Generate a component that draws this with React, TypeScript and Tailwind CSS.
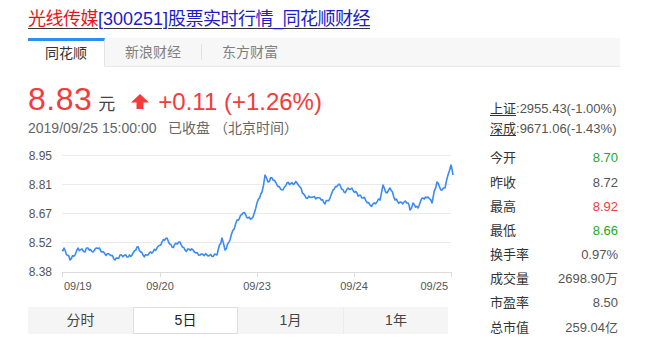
import React from 'react';

const ANCHORS: [number, number][] = [
  [62, 250], [64, 248], [70, 260], [75, 255], [78, 248], [85, 252], [88, 248], [93, 252], [97, 248],
  [102, 252], [110, 255], [115, 260], [120, 255], [127, 257], [132, 255], [137, 247], [143, 255],
  [148, 255], [153, 252], [157, 248], [162, 242], [167, 238], [172, 247], [180, 242], [185, 250],
  [193, 250], [200, 255], [207, 255], [217, 255], [222, 238], [225, 250], [230, 240], [237, 220],
  [243, 213], [248, 218], [253, 217], [257, 203], [262, 192], [265, 175], [268, 182], [272, 178],
  [277, 185], [283, 190], [287, 183], [297, 183], [300, 187], [306, 198], [313, 197], [320, 198],
  [325, 204], [330, 198], [333, 190], [339, 184], [344, 192], [348, 188], [357, 193], [363, 198],
  [370, 205], [377, 202], [380, 200], [383, 185], [387, 193], [390, 188], [395, 200], [400, 202],
  [408, 203], [410, 210], [413, 203], [418, 208], [422, 198], [428, 197], [432, 203], [433, 198],
  [437, 182], [442, 190], [445, 188], [448, 175], [451, 165], [453, 175],
];

// 앵커 사이를 잘게 나눠 살짝 흔들어 준다 (5일 분봉 느낌)
function buildLine() {
  const pts: string[] = [];
  let i = 0;
  for (let s = 0; s < ANCHORS.length - 1; s++) {
    const [x0, y0] = ANCHORS[s];
    const [x1, y1] = ANCHORS[s + 1];
    const steps = Math.max(1, Math.round((x1 - x0) / 1.3));
    for (let k = 0; k < steps; k++) {
      const t = k / steps;
      const jitter = k === 0 ? 0 : Math.sin(i * 1.9) * 1.3 + Math.sin(i * 0.61) * 0.8;
      pts.push(`${(x0 + (x1 - x0) * t).toFixed(1)},${(y0 + (y1 - y0) * t + jitter).toFixed(1)}`);
      i++;
    }
  }
  const last = ANCHORS[ANCHORS.length - 1];
  pts.push(`${last[0]},${last[1]}`);
  return 'M' + pts.join(' L');
}

const LINE = buildLine();

const Y_LABELS = [
  { v: '8.95', y: 155 },
  { v: '8.81', y: 184 },
  { v: '8.67', y: 213 },
  { v: '8.52', y: 242 },
  { v: '8.38', y: 271 },
];

const X_TICKS = [62, 160, 257, 354, 451];

function Chart() {
  return (
    <svg width="432" height="152" viewBox="28 145 432 152" className="block mt-[7px]">
      {Y_LABELS.slice(0, 4).map(l => (
        <line key={l.v} x1="62" x2="451" y1={l.y + 0.5} y2={l.y + 0.5} stroke="#ebebeb" strokeWidth="1" />
      ))}
      <line x1="62" x2="452" y1="272.5" y2="272.5" stroke="#dcdcdc" strokeWidth="1" />
      {X_TICKS.map(x => (
        <line key={x} x1={x + 0.5} x2={x + 0.5} y1="272" y2="277" stroke="#dcdcdc" strokeWidth="1" />
      ))}
      {Y_LABELS.map(l => (
        <text key={l.v} x="52" y={l.y + 4.5} textAnchor="end" fontSize="12" fill="#555"
          fontFamily="'Liberation Sans', sans-serif">{l.v}</text>
      ))}
      <g fontSize="11" fill="#555" fontFamily="'Liberation Sans', sans-serif">
        <text x="64" y="290">09/19</text>
        <text x="160" y="290" textAnchor="middle">09/20</text>
        <text x="257" y="290" textAnchor="middle">09/23</text>
        <text x="354" y="290" textAnchor="middle">09/24</text>
        <text x="448" y="290" textAnchor="end">09/25</text>
      </g>
      <path d={LINE} fill="none" stroke="#3a8af6" strokeWidth="1.6" strokeLinejoin="round" />
    </svg>
  );
}

function UpArrow() {
  return (
    <svg width="18" height="15" viewBox="0 0 18 15" className="ml-[16px] self-center mt-[4px]">
      <path d="M9 0 L18 8.5 L12.5 8.5 L12.5 15 L5.5 15 L5.5 8.5 L0 8.5 Z" fill="#f43b3b" />
    </svg>
  );
}

const STATS: { label: string; value: string; color: string }[] = [
  { label: '今开', value: '8.70', color: 'text-[#22a822]' },
  { label: '昨收', value: '8.72', color: 'text-[#555]' },
  { label: '最高', value: '8.92', color: 'text-[#f43b3b]' },
  { label: '最低', value: '8.66', color: 'text-[#22a822]' },
  { label: '换手率', value: '0.97%', color: 'text-[#555]' },
  { label: '成交量', value: '2698.90万', color: 'text-[#555]' },
  { label: '市盈率', value: '8.50', color: 'text-[#555]' },
  { label: '总市值', value: '259.04亿', color: 'text-[#555]' },
];

const RANGES = ['分时', '5日', '1月', '1年'];

export default function App() {
  return (
    <div className="w-[660px] h-[348px] overflow-hidden bg-white pl-[28px] text-[#333] font-['Liberation_Sans','Noto_Sans_CJK_SC',sans-serif]">
      {/* 제목 링크 */}
      <h1 className="pt-[8px] h-[30px] text-[18px] leading-[22px] font-normal underline underline-offset-[3px] decoration-1 whitespace-nowrap">
        <span className="text-[#e4161b] tracking-[-0.5px]">光线传媒</span>
        <span className="text-[#1c1cc8]">
          [300251]<span className="tracking-[-0.5px]">股票实时行情_同花顺财经</span>
        </span>
      </h1>

      {/* 출처 탭 */}
      <div className="mt-[8px] w-[592px] h-[29px] flex items-stretch bg-[#f7f7f7] border-b border-[#e8e8e8]">
        <div className="w-[77px] -mb-px flex items-center justify-center bg-white border-t-[3px] border-t-[#2b8ef2] border-r border-r-[#e3e3e3] border-b border-b-white text-[14px] text-[#333]">
          同花顺
        </div>
        <div className="px-[20px] flex items-center text-[14px] text-[#808080]">新浪财经</div>
        <div className="w-px h-[16px] self-center bg-[#e0e0e0]" />
        <div className="px-[20px] flex items-center text-[14px] text-[#808080]">东方财富</div>
      </div>

      <div className="flex">
        {/* 좌측: 시세 + 차트 */}
        <div className="w-[432px]">
          <div className="mt-[14px] h-[36px] flex items-baseline text-[#f43b3b]">
            <span className="text-[32px] leading-[36px] tracking-[0.5px]">8.83</span>
            <span className="ml-[6px] text-[17px] text-[#444]">元</span>
            <UpArrow />
            <span className="ml-[9px] text-[24px] leading-[36px]">+0.11 (+1.26%)</span>
          </div>
          <div className="mt-px h-[20px] leading-[20px] text-[14px] text-[#666] whitespace-pre">
            2019/09/25 15:00:00   已收盘 （北京时间）
          </div>

          <Chart />

          <div className="mt-[10px] w-[420px] h-[27px] grid grid-cols-4 bg-[#f5f5f5] text-[14px] text-[#444]">
            {RANGES.map((r, idx) => (
              <div
                key={r}
                className={`flex items-center justify-center ${
                  r === '5日'
                    ? 'bg-white border border-[#dedede] text-[#222]'
                    : idx === 3
                      ? 'border-l border-[#ececec]'
                      : ''
                }`}
              >
                {r}
              </div>
            ))}
          </div>
        </div>

        {/* 우측: 지수 + 통계 */}
        <div className="ml-[30px] w-[128px]">
          <div className="mt-[32px] text-[13px] leading-[20px] text-[#555] whitespace-nowrap">
            <div><span className="underline underline-offset-2 text-[#333]">上证</span>:2955.43(-1.00%)</div>
            <div><span className="underline underline-offset-2 text-[#333]">深成</span>:9671.06(-1.43%)</div>
          </div>
          <div className="mt-[7px]">
            {STATS.map(s => (
              <div key={s.label} className="h-[24.2px] flex items-center justify-between text-[13px]">
                <span className="text-[#333]">{s.label}</span>
                <span className={s.color}>{s.value}</span>
              </div>
            ))}
          </div>
        </div>
      </div>
    </div>
  );
}
